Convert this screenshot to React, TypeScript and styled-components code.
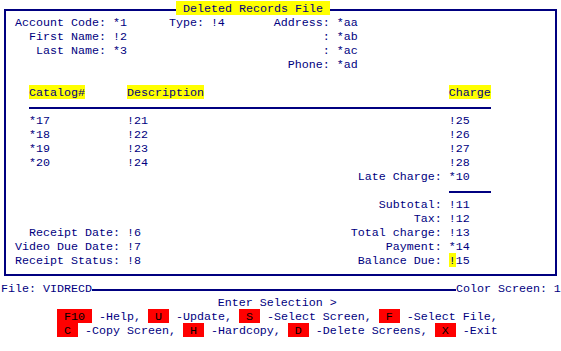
import * as React from "react";
import styled, { createGlobalStyle } from "styled-components";

const NAVY = "#000080";
const CHAR = 7;
const ROW = 14;
// text baseline sits a little low in the cell, as on the terminal
const LEADING = 17;

type Tone = "mark" | "key";

interface Seg {
  col: number;
  text: string;
  tone?: Tone;
}

interface Line {
  segs?: Seg[];
  rule?: [number, number];
}

const GlobalStyle = createGlobalStyle`
  html, body {
    margin: 0;
    padding: 0;
    background: #ffffff;
  }
`;

const Screen = styled.div`
  width: 561px;
  height: 351px;
  box-sizing: border-box;
  padding: 1px 0 0 1px;
  overflow: hidden;
  background: #ffffff;
  color: ${NAVY};
  font-family: "Liberation Mono", "Courier New", monospace;
  font-size: 11.667px;
  font-weight: normal;
`;

const Frame = styled.div`
  position: relative;
  width: 553px;
  box-sizing: border-box;
  margin: 8px 0 5px 3px;
  padding: 4px 0 7px 2px;
  border: 2px solid ${NAVY};
`;

const Title = styled.div`
  position: absolute;
  top: -10px;
  left: 170px;
  height: ${ROW}px;
  line-height: ${LEADING}px;
  white-space: pre;
  overflow: hidden;
  background: #ffff00;
`;

const Row = styled.div`
  height: ${ROW}px;
  line-height: ${LEADING}px;
  white-space: pre;
`;

const RuleRow = styled.div`
  display: flex;
  height: ${ROW}px;
  line-height: ${LEADING}px;
  white-space: pre;
`;

const Rule = styled.div<{ $offset: number; $cols: number }>`
  margin-top: 8px;
  margin-left: ${(p) => p.$offset * CHAR}px;
  width: ${(p) => p.$cols * CHAR}px;
  height: 2px;
  background: ${NAVY};
`;

const Mark = styled.span`
  display: inline-block;
  height: ${ROW}px;
  line-height: ${LEADING}px;
  vertical-align: top;
  background: #ffff00;
`;

const Key = styled.span`
  display: inline-block;
  height: ${ROW}px;
  line-height: ${LEADING}px;
  vertical-align: top;
  background: #ff0000;
  color: #000000;
`;

const renderSegs = (segs: Seg[], base: number) => {
  let cursor = base;
  const out: React.ReactNode[] = [];
  segs.forEach((s, i) => {
    if (s.col > cursor) out.push(" ".repeat(s.col - cursor));
    if (s.tone === "mark") out.push(<Mark key={i}>{s.text}</Mark>);
    else if (s.tone === "key") out.push(<Key key={i}>{s.text}</Key>);
    else out.push(s.text);
    cursor = s.col + s.text.length;
  });
  return out;
};

const item = (cat: string, desc: string, charge: string): Line => ({
  segs: [
    { col: 4, text: cat },
    { col: 18, text: desc },
    { col: 64, text: charge },
  ],
});

const frameLines: Line[] = [
  {
    segs: [
      { col: 2, text: "Account Code: *1" },
      { col: 24, text: "Type: !4" },
      { col: 39, text: "Address: *aa" },
    ],
  },
  { segs: [{ col: 4, text: "First Name: !2" }, { col: 46, text: ": *ab" }] },
  { segs: [{ col: 5, text: "Last Name: *3" }, { col: 46, text: ": *ac" }] },
  { segs: [{ col: 41, text: "Phone: *ad" }] },
  { segs: [] },
  {
    segs: [
      { col: 4, text: "Catalog#", tone: "mark" },
      { col: 18, text: "Description", tone: "mark" },
      { col: 64, text: "Charge", tone: "mark" },
    ],
  },
  { rule: [4, 70] },
  item("*17", "!21", "!25"),
  item("*18", "!22", "!26"),
  item("*19", "!23", "!27"),
  item("*20", "!24", "!28"),
  { segs: [{ col: 51, text: "Late Charge: *10" }] },
  { rule: [64, 70] },
  { segs: [{ col: 54, text: "Subtotal: !11" }] },
  { segs: [{ col: 59, text: "Tax: !12" }] },
  { segs: [{ col: 4, text: "Receipt Date: !6" }, { col: 50, text: "Total charge: !13" }] },
  { segs: [{ col: 2, text: "Video Due Date: !7" }, { col: 55, text: "Payment: *14" }] },
  {
    segs: [
      { col: 2, text: "Receipt Status: !8" },
      { col: 51, text: "Balance Due: " },
      { col: 64, text: "!", tone: "mark" },
      { col: 65, text: "15" },
    ],
  },
];

const menuLines: Seg[][] = [
  [{ col: 31, text: "Enter Selection >" }],
  [
    { col: 8, text: " F10 ", tone: "key" },
    { col: 14, text: "-Help," },
    { col: 21, text: " U ", tone: "key" },
    { col: 25, text: "-Update," },
    { col: 34, text: " S ", tone: "key" },
    { col: 38, text: "-Select Screen," },
    { col: 54, text: " F ", tone: "key" },
    { col: 58, text: "-Select File," },
  ],
  [
    { col: 8, text: " C ", tone: "key" },
    { col: 12, text: "-Copy Screen," },
    { col: 26, text: " H ", tone: "key" },
    { col: 30, text: "-Hardcopy," },
    { col: 41, text: " D ", tone: "key" },
    { col: 45, text: "-Delete Screens," },
    { col: 62, text: " X ", tone: "key" },
    { col: 66, text: "-Exit" },
  ],
];

// columns inside the frame start at col 1, the border takes col 0
const FRAME_BASE = 1;

export default function App() {
  return (
    <>
      <GlobalStyle />
      <Screen>
        <Frame>
          <Title> Deleted Records File </Title>
          {frameLines.map((line, i) =>
            line.rule ? (
              <RuleRow key={i}>
                <Rule $offset={line.rule[0] - FRAME_BASE} $cols={line.rule[1] - line.rule[0]} />
              </RuleRow>
            ) : (
              <Row key={i}>{renderSegs(line.segs || [], FRAME_BASE)}</Row>
            )
          )}
        </Frame>
        <RuleRow>
          <span>File: VIDRECD</span>
          <Rule $offset={0} $cols={52} />
          <span>Color Screen: 1</span>
        </RuleRow>
        {menuLines.map((segs, i) => (
          <Row key={i}>{renderSegs(segs, 0)}</Row>
        ))}
      </Screen>
    </>
  );
}
